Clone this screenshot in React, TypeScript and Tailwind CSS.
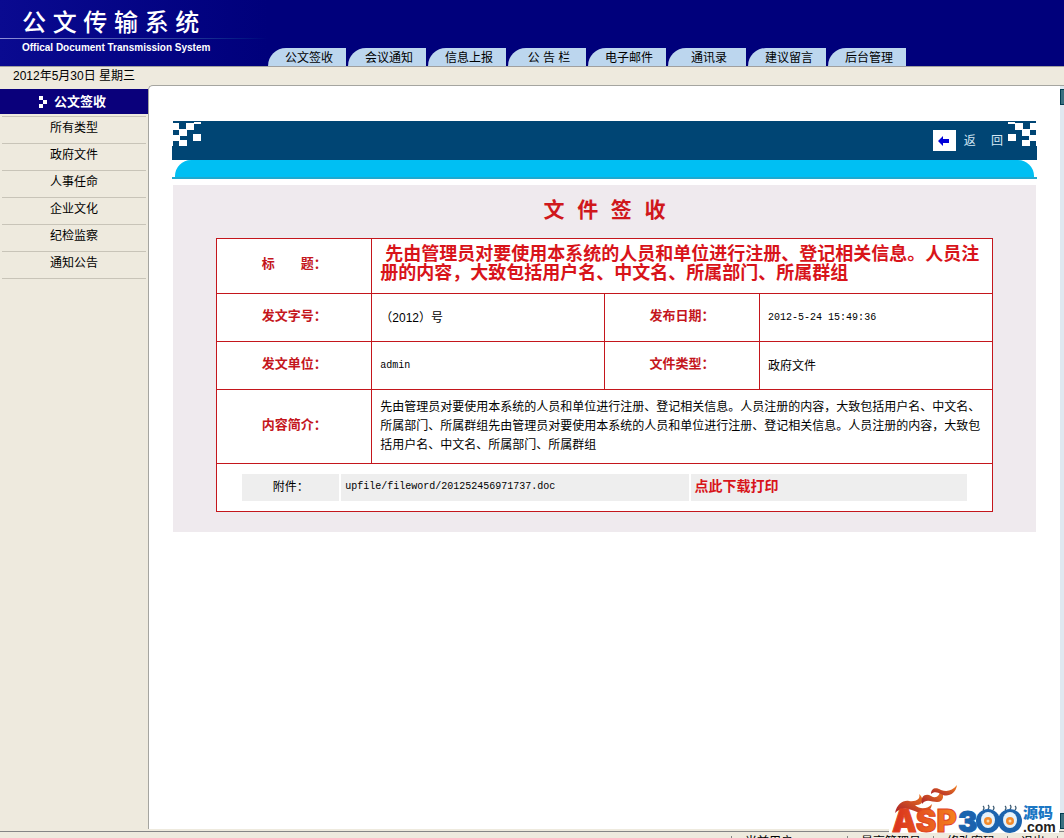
const tabs = [
  "公文签收",
  "会议通知",
  "信息上报",
  "公 告 栏",
  "电子邮件",
  "通讯录",
  "建议留言",
  "后台管理",
];

const menu = ["所有类型", "政府文件", "人事任命", "企业文化", "纪检监察", "通知公告"];

const footerLinks = ["当前用户", "最高管理员", "修改密码", "退出"];

const summary =
  "先由管理员对要使用本系统的人员和单位进行注册、登记相关信息。人员注册的内容，大致包括用户名、中文名、所属部门、所属群组先由管理员对要使用本系统的人员和单位进行注册、登记相关信息。人员注册的内容，大致包括用户名、中文名、所属部门、所属群组";

const subject =
  "先由管理员对要使用本系统的人员和单位进行注册、登记相关信息。人员注册的内容，大致包括用户名、中文名、所属部门、所属群组";

const labelCell =
  "border border-[#c4161c] pb-1 text-center text-[13px] font-bold text-[#c4161c]";
const valueCell = "border border-[#c4161c] px-2 text-left";
const mono = "font-['Liberation_Mono','Noto_Sans_CJK_SC',monospace]";

function Checker({ className }: { className?: string }) {
  return (
    <svg
      className={className}
      width="34"
      height="26"
      viewBox="0 0 34 26"
      fill="#fff"
      shapeRendering="crispEdges"
      aria-hidden="true"
    >
      <path d="M0 0h1v25H0zM1 2h6v7H1zM14 2h8v7h-8zM22 1h7v2h-7zM7 8h8v7H7zM1 14h7v6H1zM21 13h8v7h-8zM7 19h8v6H7z" />
    </svg>
  );
}

function SiteLogo() {
  return (
    <svg width="170" height="54" viewBox="0 0 170 54" role="img" aria-label="ASP300">
      <defs>
        <linearGradient id="fire" x1="0" y1="0" x2="1" y2="0">
          <stop offset="0" stopColor="#d9301e" />
          <stop offset="1" stopColor="#f5821f" />
        </linearGradient>
        <linearGradient id="ember" x1="0" y1="1" x2="1" y2="0">
          <stop offset="0" stopColor="#a8202a" />
          <stop offset="1" stopColor="#f5821f" />
        </linearGradient>
      </defs>
      <rect width="170" height="51" fill="#fff" />
      <g fill="url(#ember)">
        <path d="M6 31C8 22 14 18 20 19C27 20 32 17 30 12C36 17 34 24 26 23C31 28 39 27 43 22C42 30 35 33 28 30C20 26 12 25 6 31Z" />
        <path d="M33 22C31 14 37 11 42 14C47 17 51 14 51 8C56 12 55 20 48 20C43 20 37 16 33 22Z" />
        <path d="M42 12C42 6 47 5 52 8C58 10 63 9 68 3C67 11 60 15 54 13C49 10 45 9 42 12Z" />
      </g>
      <g fontFamily="Inter, 'Liberation Sans', sans-serif" fontWeight="900" fontSize="31">
        <text x="3" y="50" fill="url(#fire)" stroke="#e0441f">
          ASP
        </text>
        <text x="69" y="50" fontSize="29" fill="#1b63ae" stroke="#1b63ae">
          3
        </text>
      </g>
      {/* the two zeros are fried eggs in blue pans */}
      {[99, 121].map((cx) => (
        <g key={cx}>
          <circle cx={cx} cy="39" r="12" fill="#1b63ae" />
          <ellipse cx={cx} cy="38" rx="7" ry="8" fill="#e4f1fb" />
          <circle cx={cx} cy="39" r="4" fill="#f28a2c" />
          <circle cx={cx} cy="39" r="1.5" fill="#fbd9a8" />
          <path
            d={`M${cx - 5} 28q2-2 0-4M${cx} 27q2-2 0-4M${cx + 5} 28q2-2 0-4`}
            fill="none"
            stroke="#37566f"
            strokeWidth="1.2"
          />
        </g>
      ))}
      <text
        x="134"
        y="36"
        fill="#1b77c4"
        fontFamily="'Noto Sans CJK SC', sans-serif"
        fontWeight="900"
        fontSize="15"
      >
        源码
      </text>
      <text
        x="134"
        y="50"
        fill="#222"
        fontFamily="'Liberation Sans', sans-serif"
        fontWeight="700"
        fontSize="14"
      >
        .com
      </text>
    </svg>
  );
}

export default function App() {
  return (
    <div className="relative flex h-screen flex-col overflow-hidden bg-[#eeeade] font-['Liberation_Sans','Noto_Sans_CJK_SC',sans-serif] text-xs text-black">
      {/* Header */}
      <header className="flex h-[67px] shrink-0 border-b border-[#a0a0a0] bg-[#00007b]">
        <div className="w-[268px] shrink-0 bg-linear-to-r from-[#0a0a90] to-[#00007b] pt-2 text-white">
          <h1 className="h-[30px] pl-[22px] text-2xl leading-[30px] font-medium whitespace-nowrap">
            公 文 传 输 系 统
          </h1>
          <div className="h-px bg-linear-to-r from-[#8f8fd8] to-[#00007b]" />
          <p className="pt-[3px] pl-[22px] text-[10px] leading-3 font-bold whitespace-nowrap">
            Offical Document Transmission System
          </p>
        </div>
        <nav className="flex items-end gap-0.5">
          {tabs.map((tab) => (
            <a
              key={tab}
              href="#"
              className="flex h-[18px] w-[78px] items-center justify-center rounded-tl-[18px] bg-[#bcd6ee] pt-0.5 pl-1 whitespace-nowrap"
            >
              {tab}
            </a>
          ))}
        </nav>
      </header>

      {/* Date bar */}
      <div className="h-[18px] shrink-0 pl-[13px] leading-[18px]">
        2012年5月30日 星期三
      </div>

      <div className="flex min-h-0 flex-1">
        {/* Sidebar */}
        <aside className="w-[148px] shrink-0 pt-1">
          <h2 className="flex h-[25px] items-center bg-[#0a007b] pl-[39px] text-[13px] font-bold text-white">
            <svg
              className="mr-[7px]"
              width="8"
              height="12"
              viewBox="0 0 8 12"
              fill="#fff"
              shapeRendering="crispEdges"
              aria-hidden="true"
            >
              <path d="M0 0h4v4H0zM4 4h4v4H4zM0 8h4v4H0z" />
            </svg>
            公文签收
          </h2>
          <ul className="mx-0.5 mt-0.5 border-t border-[#c8c4b8]">
            {menu.map((item) => (
              <li key={item} className="border-b border-[#c8c4b8]">
                <a href="#" className="block h-[26px] text-center leading-[22px]">
                  {item}
                </a>
              </li>
            ))}
          </ul>
        </aside>

        {/* Content */}
        <main className="flex min-w-0 flex-1 overflow-hidden rounded-tl-[5px] border-t border-l border-[#a5a5a0] bg-white">
          <div className="min-w-0 flex-1 px-[23px] pt-[35px]">
            <div className="flex h-[39px] items-start justify-between bg-[#004574]">
              <Checker />
              <div className="flex items-start">
                <a href="#" className="mt-[9px] flex items-center text-[#d5e8f5]">
                  <span className="mr-2 flex h-[21px] w-[23px] items-center justify-center bg-white">
                    <svg width="12" height="10" viewBox="0 0 12 10" fill="#0000d8" aria-hidden="true">
                      <path d="M0 5L5 0V3H11V7H5V10Z" />
                    </svg>
                  </span>
                  <span className="whitespace-pre">返{"\u3000"} 回</span>
                </a>
                <Checker className="-scale-x-100" />
              </div>
            </div>
            <div className="border-b-2 border-[#1fa9cf] px-[3px]">
              <div className="h-[17px] rounded-t-[16px] bg-[#00bff3]" />
            </div>

            <section className="mx-px mt-1.5 bg-[#efeaee] pt-3 pb-5">
              <h2
                className={`${mono} mb-3 text-center text-[21px] leading-[29px] font-bold text-[#d0181c]`}
              >
                文 件 签 收
              </h2>
              <table className="mx-auto w-[90%] table-fixed border-collapse border border-[#c4161c] bg-white">
                <colgroup>
                  <col className="w-1/5" />
                  <col className="w-[30%]" />
                  <col className="w-1/5" />
                  <col className="w-[30%]" />
                </colgroup>
                <tbody>
                  <tr className="h-[55px]">
                    <th className={labelCell}>标{"\u3000\u3000"}题：</th>
                    <td
                      colSpan={3}
                      className={`${valueCell} pb-1 text-lg leading-[19px] font-bold text-[#d8141a]`}
                    >
                      &nbsp;{subject}
                    </td>
                  </tr>
                  <tr className="h-12">
                    <th className={labelCell}>发文字号：</th>
                    <td className={valueCell}>（2012）号</td>
                    <th className={labelCell}>发布日期：</th>
                    <td className={`${valueCell} ${mono} text-[10px]`}>2012-5-24 15:49:36</td>
                  </tr>
                  <tr className="h-12">
                    <th className={labelCell}>发文单位：</th>
                    <td className={`${valueCell} ${mono} text-[10px]`}>admin</td>
                    <th className={labelCell}>文件类型：</th>
                    <td className={valueCell}>政府文件</td>
                  </tr>
                  <tr className="h-[74px]">
                    <th className={labelCell}>内容简介：</th>
                    <td colSpan={3} className={`${valueCell} leading-[19px]`}>
                      {summary}
                    </td>
                  </tr>
                  <tr className="h-12">
                    <td colSpan={4} className="border border-[#c4161c] px-[25px]">
                      <div className="flex h-[27px] gap-0.5 leading-[26px]">
                        <div className="w-[97px] bg-[#eeeeee] text-center">附件：</div>
                        <div className={`${mono} min-w-0 flex-[348] bg-[#eeeeee] pl-1 text-[10px]`}>
                          upfile/fileword/201252456971737.doc
                        </div>
                        <div className="min-w-0 flex-[276] bg-[#eeeeee] pl-1">
                          <a href="#" className="text-sm leading-6 font-bold text-[#d8141a]">
                            点此下载打印
                          </a>
                        </div>
                      </div>
                    </td>
                  </tr>
                </tbody>
              </table>
            </section>
          </div>

          {/* Scroll track */}
          <div className="flex w-1 shrink-0 flex-col justify-between bg-[#e0e8f0] pt-[3px]">
            <div className="h-4 border border-r-0 border-[#003c50] bg-[#3a7080]" />
            <div className="h-4 border border-r-0 border-[#003c50] bg-[#3a7080]" />
          </div>
        </main>
      </div>

      {/* Status bar */}
      <footer className="mt-0.5 flex h-[7px] shrink-0 justify-end overflow-hidden border-t border-[#858585] pt-1 pr-1.5 leading-3">
        {footerLinks.map((item) => (
          <a
            key={item}
            href="#"
            className="h-3 border-l border-[#858585] pr-3 pl-[13px] whitespace-nowrap first:w-[116px] last:border-r"
          >
            {item}
          </a>
        ))}
      </footer>

      <div className="absolute right-[5px] bottom-0.5">
        <SiteLogo />
      </div>
    </div>
  );
}
